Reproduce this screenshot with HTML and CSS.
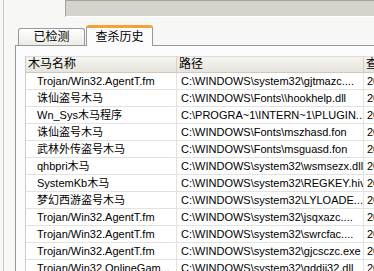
FILE: index.html
```html
<!DOCTYPE html>
<html lang="zh">

<head>
  <meta charset="UTF-8" />
  <title>查杀历史</title>
  <link rel="stylesheet" href="styles.css">
</head>

<body>

  <div class="window">
    <div class="topbar">
      <div class="field"></div>
    </div>

    <div class="tabs">
      <div class="tab">已检测</div>
      <div class="tab active">查杀历史</div>
    </div>

    <div class="panel">
      <table class="list">
        <colgroup>
          <col class="c-name">
          <col class="c-path">
          <col class="c-time">
        </colgroup>
        <thead>
          <tr>
            <th>木马名称</th>
            <th>路径</th>
            <th>查杀时间</th>
          </tr>
        </thead>
        <tbody>
          <tr><td>Trojan/Win32.AgentT.fm</td><td>C:\WINDOWS\system32\gjtmazc....</td><td>2008</td></tr>
          <tr><td>诛仙盗号木马</td><td>C:\WINDOWS\Fonts\\hookhelp.dll</td><td>2008</td></tr>
          <tr><td>Wn_Sys木马程序</td><td>C:\PROGRA~1\INTERN~1\PLUGIN...</td><td>2008</td></tr>
          <tr><td>诛仙盗号木马</td><td>C:\WINDOWS\Fonts\mszhasd.fon</td><td>2008</td></tr>
          <tr><td>武林外传盗号木马</td><td>C:\WINDOWS\Fonts\msguasd.fon</td><td>2008</td></tr>
          <tr><td>qhbpri木马</td><td>C:\WINDOWS\system32\wsmsezx.dll</td><td>2008</td></tr>
          <tr><td>SystemKb木马</td><td>C:\WINDOWS\system32\REGKEY.hiv</td><td>2008</td></tr>
          <tr><td>梦幻西游盗号木马</td><td>C:\WINDOWS\system32\LYLOADE...</td><td>2008</td></tr>
          <tr><td>Trojan/Win32.AgentT.fm</td><td>C:\WINDOWS\system32\jsqxazc....</td><td>2008</td></tr>
          <tr><td>Trojan/Win32.AgentT.fm</td><td>C:\WINDOWS\system32\swrcfac....</td><td>2008</td></tr>
          <tr><td>Trojan/Win32.AgentT.fm</td><td>C:\WINDOWS\system32\gjcsczc.exe</td><td>2008</td></tr>
          <tr><td>Trojan/Win32.OnlineGam...</td><td>C:\WINDOWS\system32\gddii32.dll</td><td>2008</td></tr>
        </tbody>
      </table>
    </div>
  </div>

</body>

</html>
```

FILE: styles.css
```css
* {
  margin: 0;
  padding: 0;
  box-sizing: border-box;
}

body {
  font-family: 'Liberation Sans', 'Noto Sans CJK SC', sans-serif;
  font-size: 11px;
  color: #000;
  background: #f7f7f5;
  overflow: hidden;
  height: 271px;
}

.window {
  margin-left: 3px;
  border-left: 1px solid #c9c9c4;
  height: 271px;
  padding-left: 11px;
}

.topbar {
  height: 25px;
  padding-left: 50px;
}

.field {
  height: 17px;
  background: #d6d3cc;
  border-top: 1px solid #a5a39d;
  border-left: 1px solid #a5a39d;
  border-bottom: 1px solid #fff;
}

.tabs {
  display: flex;
  align-items: flex-end;
  height: 20px;
  padding-left: 3px;
  gap: 1px;
  position: relative;
  z-index: 1;
}

.tab {
  width: 67px;
  height: 17px;
  line-height: 16px;
  text-align: center;
  font-size: 12px;
  background: linear-gradient(#ffffff, #ecebe5);
  border: 1px solid #919b9c;
  border-bottom: none;
  border-radius: 3px 3px 0 0;
}

.tab.active {
  height: 21px;
  line-height: 18px;
  background: #fcfcfe;
  border-top: 3px solid #f3a334;
  margin-bottom: -1px;
}

.panel {
  border: 1px solid #919b9c;
  border-right: none;
  background: #fcfcfe;
  height: 240px;
  padding: 10px 0 0 9px;
  overflow: hidden;
}

.list {
  border-collapse: separate;
  border-spacing: 0;
  table-layout: fixed;
  width: 400px;
  background: #fff;
  border-left: 1px solid #cfcdc6;
}

.c-name {
  width: 151px;
}

.c-path {
  width: 187px;
}

.list th {
  height: 17px;
  line-height: 15px;
  font-weight: normal;
  font-size: 12px;
  text-align: left;
  padding: 0 0 0 2px;
  background: linear-gradient(#f5f4f0, #e6e4dc);
  border-top: 1px solid #dedcd5;
  border-right: 1px solid #d2d0c8;
  border-bottom: 1px solid #cdcac1;
  white-space: nowrap;
  overflow: hidden;
}

.list td {
  height: 17px;
  line-height: 16px;
  padding: 0 0 0 4px;
  white-space: nowrap;
  overflow: hidden;
  border-right: 1px solid #e2e2e2;
  border-bottom: 1px solid #e2e2e2;
}

.list td:first-child {
  padding-left: 11px;
}

.list td:last-child {
  padding-left: 3px;
}
```
